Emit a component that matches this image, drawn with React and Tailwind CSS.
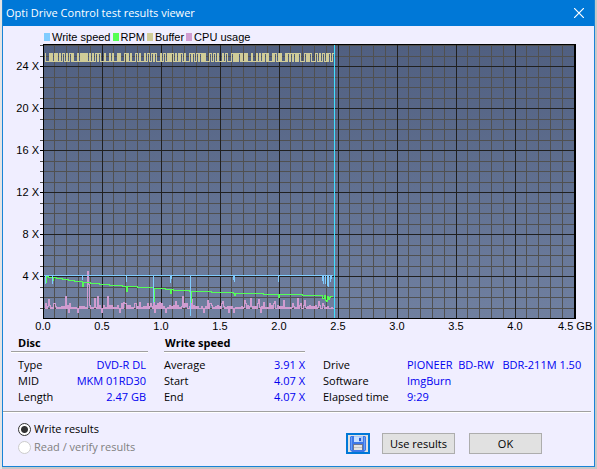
import React from "react";

const xLabels = ["0.0", "0.5", "1.0", "1.5", "2.0", "2.5", "3.0", "3.5", "4.0"];
const yLabels = ["24 X", "20 X", "16 X", "12 X", "8 X", "4 X"];

const legend = [
  { name: "Write speed", color: "bg-[#80ccff]" },
  { name: "RPM", color: "bg-[#55ff55]" },
  { name: "Buffer", color: "bg-[#d0cc98]" },
  { name: "CPU usage", color: "bg-[#d09cd0]" },
];

const disc = [
  ["Type", "DVD-R DL"],
  ["MID", "MKM 01RD30"],
  ["Length", "2.47 GB"],
];

const speed = [
  ["Average", "3.91 X"],
  ["Start", "4.07 X"],
  ["End", "4.07 X"],
];

const drive = [
  ["Drive", "PIONEER  BD-RW   BDR-211M 1.50"],
  ["Software", "ImgBurn"],
  ["Elapsed time", "9:29"],
];

// grid lines, in plot units (59 per 0.5 GB, 42 per 4 X)
const minorX = [];
const majorX = [];
for (let i = 0; i < 9; i++) {
  if (i > 0) majorX.push(i * 59);
  [11, 23, 35, 47].forEach((o) => minorX.push(i * 59 + o));
}
const majorY = [22, 64, 106, 148, 190, 232];
const minorY = [1, 12];
majorY.forEach((y) => [11, 21, 32].forEach((o) => minorY.push(y + o)));

const END = 290;

// repeatable noise for the sampled curves
const makeNoise = (seed) => {
  let s = seed;
  return () => {
    s = (s * 16807) % 2147483647;
    return s / 2147483647;
  };
};

// one sample per unit, drawn as steps
const toSteps = (list) => "M" + list.map(([x, y], i) => (i ? `H${x}V${y}` : `${x} ${y}`)).join("");

const bufferPath = () => {
  const rand = makeNoise(77);
  const out = [];
  let high = false;
  let hold = 0;
  for (let x = 1; x <= END; x++) {
    if (hold > 0) {
      hold--;
    } else {
      high = !high;
      const r = rand();
      if (!high && r < 0.25) hold = 3;
      else if (r > 0.65) hold = 1;
    }
    out.push([x, high ? 9 : 17]);
  }
  return toSteps(out);
};

const cpuSpikes = {
  5: 255, 22: 252, 44: 227, 45: 240, 51: 254, 54: 252, 64: 252, 80: 258,
  96: 258, 110: 257, 116: 258, 132: 257, 139: 252, 148: 255,
  164: 256, 179: 257, 201: 256, 207: 254, 215: 255, 220: 258,
  231: 257, 240: 256, 254: 254, 261: 256, 275: 257,
};
const cpuDips = [25, 34, 58, 76, 111, 122, 160, 185, 190, 217];

const cpuPath = () => {
  const rand = makeNoise(4211);
  const out = [];
  for (let x = 1; x <= END; x++) {
    const r = rand();
    let y = x % 2 ? 264 : 261 + Math.round(r * 3);
    if (r > 0.88) y = 259;
    if (cpuSpikes[x]) y = cpuSpikes[x];
    if (cpuDips.includes(x)) y = 268;
    out.push([x, y]);
  }
  return toSteps(out);
};

const speedDips = {
  2: 239, 9: 239, 39: 235, 83: 237, 110: 258, 127: 238, 128: 234, 147: 271,
  190: 235, 191: 237, 235: 237, 279: 236, 280: 239, 282: 239, 284: 241, 285: 242,
  287: 237, 288: 234,
};
const rpmDips = {
  2: 238, 9: 236, 39: 242, 83: 247, 110: 257, 127: 249, 147: 258, 191: 251, 235: 253,
  279: 254, 280: 254, 282: 256, 283: 257, 285: 255, 286: 253,
};
const rpmCurve = [
  [0, 232], [10, 233], [27, 236], [51, 239], [71, 241], [117, 244], [134, 246],
  [157, 247], [200, 249], [240, 250], [277, 251], [290, 252],
];

const rpmAt = (x) => {
  const i = rpmCurve.findIndex((p) => p[0] >= x);
  const [x1, y1] = rpmCurve[i];
  const [x0, y0] = rpmCurve[i - 1];
  return Math.round(y0 + ((y1 - y0) * (x - x0)) / (x1 - x0));
};

const rpmPath = () => {
  const out = [];
  for (let x = 1; x < END; x++) out.push([x, rpmDips[x] || rpmAt(x)]);
  return toSteps(out);
};

const Plot = () => (
  <svg
    viewBox="0 0 533 275"
    preserveAspectRatio="none"
    shapeRendering="crispEdges"
    className="block w-full h-[275px]"
    role="img"
    aria-label="Write speed chart"
  >
    <defs>
      <linearGradient id="plotFill" x1="0" y1="0" x2="0" y2="1">
        <stop offset="0" stopColor="#505f80" />
        <stop offset="1" stopColor="#7080a0" />
      </linearGradient>
    </defs>
    <rect width="533" height="275" fill="url(#plotFill)" />
    <g fill="#505050">
      {minorX.map((x) => <rect key={x} x={x} y="0" width="1" height="275" />)}
      {minorY.map((y) => <rect key={y} x="0" y={y} width="533" height="1" />)}
    </g>
    <g fill="#202020">
      {majorX.map((x) => <rect key={x} x={x} y="0" width="1" height="275" />)}
      {majorY.map((y) => <rect key={y} x="0" y={y} width="533" height="1" />)}
    </g>
    <g fill="none" strokeWidth="1" transform="translate(0.5 0.5)">
      <path d={bufferPath()} stroke="#d0cc98" />
      <path d={cpuPath()} stroke="#d09cd0" />
      <path d={rpmPath()} stroke="#55ff55" />
    </g>
    <g fill="#80ccff">
      <rect x="1" y="231" width="289" height="1" />
      {Object.entries(speedDips).map(([x, y]) => (
        <rect key={x} x={x} y="231" width="1" height={y - 230} />
      ))}
    </g>
    <rect x="291" y="0" width="1" height="274" fill="#40e0ff" />
    <path d="M0 0H533V275H0ZM1 1V274H531V1Z" fill="#000" fillRule="evenodd" />
  </svg>
);

const Ticks = () => (
  <svg viewBox="0 0 3 275" className="block w-[3px] h-[275px]" shapeRendering="crispEdges" aria-hidden="true">
    {minorY.map((y) => <rect key={y} y={y} width="3" height="1" fill="#505050" />)}
    {majorY.map((y) => <rect key={y} y={y} width="3" height="1" fill="#000" />)}
  </svg>
);

const InfoTable = ({ rows, labelWidth, right }) => (
  <table className="w-full">
    <tbody>
      {rows.map(([label, value]) => (
        <tr key={label} className="h-4">
          <th scope="row" className={`p-0 text-left font-normal ${labelWidth}`}>{label}</th>
          <td className={`p-0 whitespace-pre text-[#0000f0] ${right ? "text-right" : "text-left"}`}>{value}</td>
        </tr>
      ))}
    </tbody>
  </table>
);

const SaveIcon = () => (
  <svg viewBox="0 0 16 16" className="w-4 h-4" aria-hidden="true">
    <path d="M1 0H15L16 1V14L14 16H2L0 14V1Z" fill="#3d78e8" />
    <path d="M1 1H2V14H1ZM14 1H15V14H14Z" fill="#6aa0f8" />
    <rect x="4" y="0" width="9" height="6" fill="#a8c8f8" />
    <rect x="4" y="1" width="5" height="5" fill="#c8e0ff" />
    <rect x="9" y="2" width="2" height="3" fill="#2858d0" />
    <rect x="3" y="8" width="10" height="6" fill="#707890" />
    <rect x="4" y="9" width="8" height="5" fill="#e4e4e4" />
    <rect x="4" y="11" width="8" height="1" fill="#c4c4c4" />
  </svg>
);

const App = () => {
  return (
    <div className="border-l-2 border-[#e4e4e4] bg-[#c8c8c8] pr-[2px] pb-[2px] font-['Open_Sans',sans-serif] text-[11px] leading-4 text-black">
      <div className="border border-t-0 border-[#1883d7] bg-[#f0eeff]">
        {/* title bar */}
        <header className="flex items-center justify-between h-[26px] pl-[3px] pr-[10px] bg-[#0078d7] text-white">
          <h1>Opti Drive Control test results viewer</h1>
          <button type="button" aria-label="Close" className="p-0">
            <svg viewBox="0 0 10 10" className="w-[10px] h-[10px]" aria-hidden="true">
              <path d="M0 0L10 10M10 0L0 10" stroke="#fff" strokeWidth="1.2" />
            </svg>
          </button>
        </header>

        {/* chart */}
        <section className="pt-1 pr-[18px] font-['Liberation_Sans',sans-serif]">
          <ul className="flex gap-[2px] h-[14px] pl-[41px]">
            {legend.map((item) => (
              <li key={item.name} className="flex items-center gap-[2px]">
                <span className={`w-[6px] h-2 ${item.color}`}></span>
                {item.name}
              </li>
            ))}
          </ul>
          <div className="flex">
            <div className="flex flex-col items-end w-[37px] pt-[1px] pr-[1px]">
              {yLabels.map((label) => (
                <span key={label} className="flex items-center h-[42px]">{label}</span>
              ))}
            </div>
            <Ticks />
            <div className="flex-1">
              <Plot />
              <div className="flex h-4 leading-[14px]">
                {xLabels.map((label) => (
                  <span key={label} className="flex-1">
                    <span className="block w-4 -ml-2 text-center">{label}</span>
                  </span>
                ))}
                <span className="w-[2px] whitespace-nowrap">
                  <span className="block w-9 -ml-4">4.5 GB</span>
                </span>
              </div>
            </div>
          </div>
        </section>

        {/* disc and drive details */}
        <section className="flex pl-2 pr-1 pb-[6px]">
          <div className="w-[137px]">
            <h2 className="pl-[7px] h-[17px] border-b border-[#a0a0a0] font-bold shadow-[0_1px_0_#fff]">Disc</h2>
            <div className="pt-[5px] pl-[7px] pr-[2px]">
              <InfoTable rows={disc} labelWidth="" right />
            </div>
          </div>
          <div className="w-[141px] ml-4">
            <h2 className="pl-[1px] h-[17px] border-b border-[#a0a0a0] font-bold shadow-[0_1px_0_#fff]">Write speed</h2>
            <div className="pt-[5px]">
              <InfoTable rows={speed} labelWidth="" right />
            </div>
          </div>
          <div className="flex-1 ml-[18px] pt-[22px]">
            <InfoTable rows={drive} labelWidth="w-[84px]" />
          </div>
        </section>

        {/* bottom bar */}
        <footer className="flex justify-between mr-[3px] pt-[8px] pl-[15px] pr-[49px] h-[55px] border-t border-[#a0a0a0] shadow-[inset_0_1px_0_#fff]">
          <div>
            <label className="flex items-center gap-[3px] h-[18px]">
              <input
                type="radio"
                name="results"
                defaultChecked
                className="appearance-none w-[13px] h-[13px] rounded-full border border-[#333] bg-white bg-[radial-gradient(circle,#333_3px,transparent_4px)]"
              />
              Write results
            </label>
            <label className="flex items-center gap-[3px] h-[18px] text-[#808080]">
              <input
                type="radio"
                name="results"
                disabled
                className="appearance-none w-[13px] h-[13px] rounded-full border border-[#ccc] bg-white"
              />
              Read / verify results
            </label>
          </div>
          <div className="flex items-start pt-[13px]">
            <button
              type="button"
              aria-label="Save"
              className="flex items-center justify-center w-6 h-[21px] mr-3 border-2 border-[#0078d7] bg-[#e1e1e1]"
            >
              <SaveIcon />
            </button>
            <button type="button" className="w-[73px] h-[21px] mr-[14px] border border-[#adadad] bg-[#e1e1e1]">
              Use results
            </button>
            <button type="button" className="w-[73px] h-[21px] border border-[#adadad] bg-[#e1e1e1]">OK</button>
          </div>
        </footer>
      </div>
    </div>
  );
};

export default App;
